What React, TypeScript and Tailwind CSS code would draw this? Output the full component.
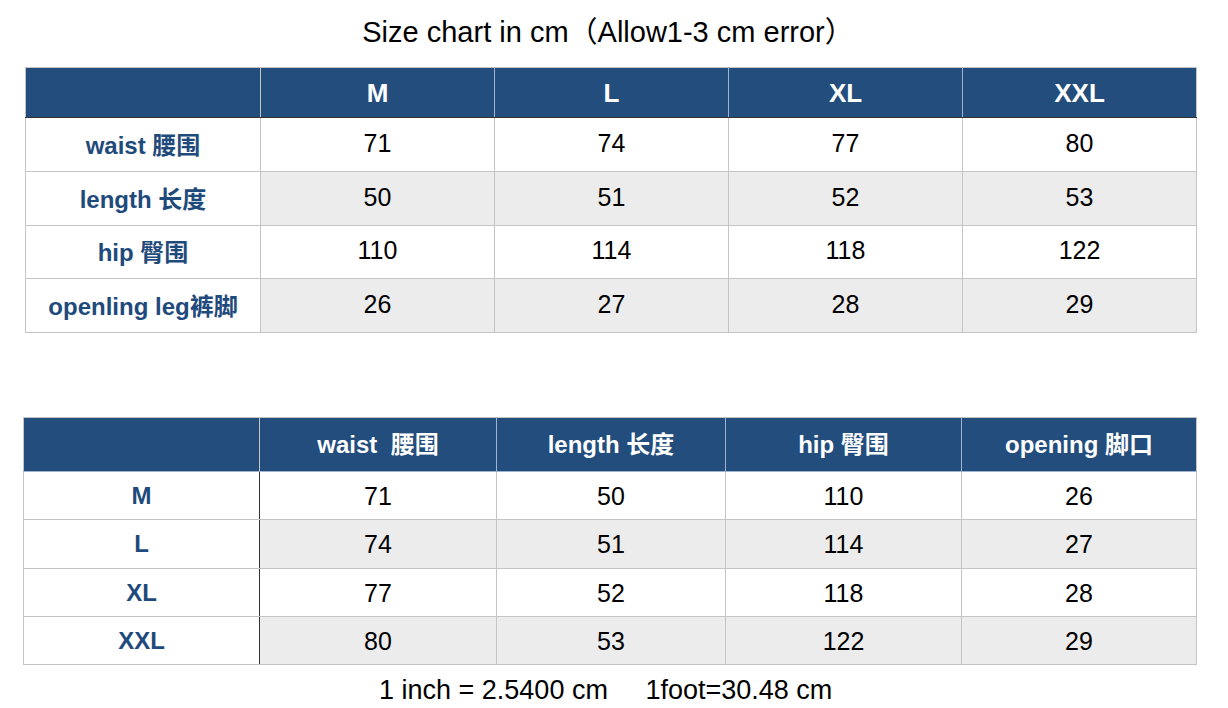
const font = {
  fontFamily: '"Liberation Sans", "Noto Sans CJK SC", sans-serif',
};

const sizes = ["M", "L", "XL", "XXL"];

const chart1 = [
  { label: "waist 腰围", values: ["71", "74", "77", "80"] },
  { label: "length 长度", values: ["50", "51", "52", "53"] },
  { label: "hip 臀围", values: ["110", "114", "118", "122"] },
  { label: "openling leg裤脚", values: ["26", "27", "28", "29"] },
];

const chart2Head = ["waist  腰围", "length 长度", "hip 臀围", "opening 脚口"];
const chart2 = [
  { size: "M", values: ["71", "50", "110", "26"] },
  { size: "L", values: ["74", "51", "114", "27"] },
  { size: "XL", values: ["77", "52", "118", "28"] },
  { size: "XXL", values: ["80", "53", "122", "29"] },
];

const rowH1 = ["h-[54px]", "h-[54px]", "h-[53px]", "h-[54px]"];
const rowH2 = ["h-[48px]", "h-[49px]", "h-[48px]", "h-[48px]"];

export default function App() {
  return (
    <div className="w-[1228px] h-[708px] bg-white text-black overflow-hidden" style={font}>
      <h1 className="h-[67px] pt-[14px] pr-[12px] text-center text-[29px] leading-[36px]">
        Size chart in cm（Allow1-3 cm error）
      </h1>

      <table className="ml-[25px] w-[1171px] table-fixed border-collapse">
        <colgroup>
          <col className="w-[235px]" />
          <col className="w-[234px]" />
          <col className="w-[234px]" />
          <col className="w-[234px]" />
          <col className="w-[234px]" />
        </colgroup>
        <thead>
          <tr className="h-[50px] bg-[#224d7d] text-white">
            <th className="border border-[#c4c4c4] border-b-[#333333]"></th>
            {sizes.map((s, j) => (
              <th
                key={s}
                className={`border border-y-[#c4c4c4] border-l-[#9fb3cf] border-b-[#333333] text-[26px] leading-[30px] font-bold ${
                  j === 3 ? "border-r-[#c4c4c4]" : "border-r-[#9fb3cf]"
                }`}
              >
                {s}
              </th>
            ))}
          </tr>
        </thead>
        <tbody>
          {chart1.map((r, i) => (
            <tr key={r.label} className={rowH1[i]}>
              <td className="border border-[#c4c4c4] bg-white text-center text-[24px] leading-[30px] font-bold text-[#1f4a7c] pt-[2px]">
                {r.label}
              </td>
              {r.values.map((v, j) => (
                <td
                  key={j}
                  className={`border border-[#c4c4c4] text-center text-[25px] leading-[30px] pb-[4px] ${
                    i % 2 === 1 ? "bg-[#ececec]" : "bg-white"
                  }`}
                >
                  {v}
                </td>
              ))}
            </tr>
          ))}
        </tbody>
      </table>

      <div className="h-[84px]"></div>

      <table className="ml-[23px] w-[1173px] table-fixed border-collapse">
        <colgroup>
          <col className="w-[236px]" />
          <col className="w-[237px]" />
          <col className="w-[229px]" />
          <col className="w-[236px]" />
          <col className="w-[235px]" />
        </colgroup>
        <thead>
          <tr className="h-[54px] bg-[#224d7d] text-white">
            <th className="border border-[#c4c4c4] border-b-[#9fb3cf]"></th>
            {chart2Head.map((h, j) => (
              <th
                key={h}
                className={`border border-[#c4c4c4] border-l-[#9fb3cf] border-b-[#9fb3cf] text-[24px] leading-[30px] font-bold whitespace-pre ${
                  j === 3 ? "" : "border-r-[#9fb3cf]"
                }`}
              >
                {h}
              </th>
            ))}
          </tr>
        </thead>
        <tbody>
          {chart2.map((r, i) => (
            <tr key={r.size} className={rowH2[i]}>
              <td className="border border-[#c4c4c4] border-r-[#333333] bg-white text-center text-[24px] leading-[30px] font-bold text-[#1f4a7c]">
                {r.size}
              </td>
              {r.values.map((v, j) => (
                <td
                  key={j}
                  className={`border border-[#c4c4c4] text-center text-[25px] leading-[30px] ${
                    j === 0 ? "border-l-[#333333]" : ""
                  } ${i % 2 === 1 ? "bg-[#ececec]" : "bg-white"}`}
                >
                  {v}
                </td>
              ))}
            </tr>
          ))}
        </tbody>
      </table>

      <p className="mt-[8px] pl-[379px] text-[27px] leading-[34px] whitespace-pre">
        {"1 inch = 2.5400 cm     1foot=30.48 cm"}
      </p>
    </div>
  );
}
